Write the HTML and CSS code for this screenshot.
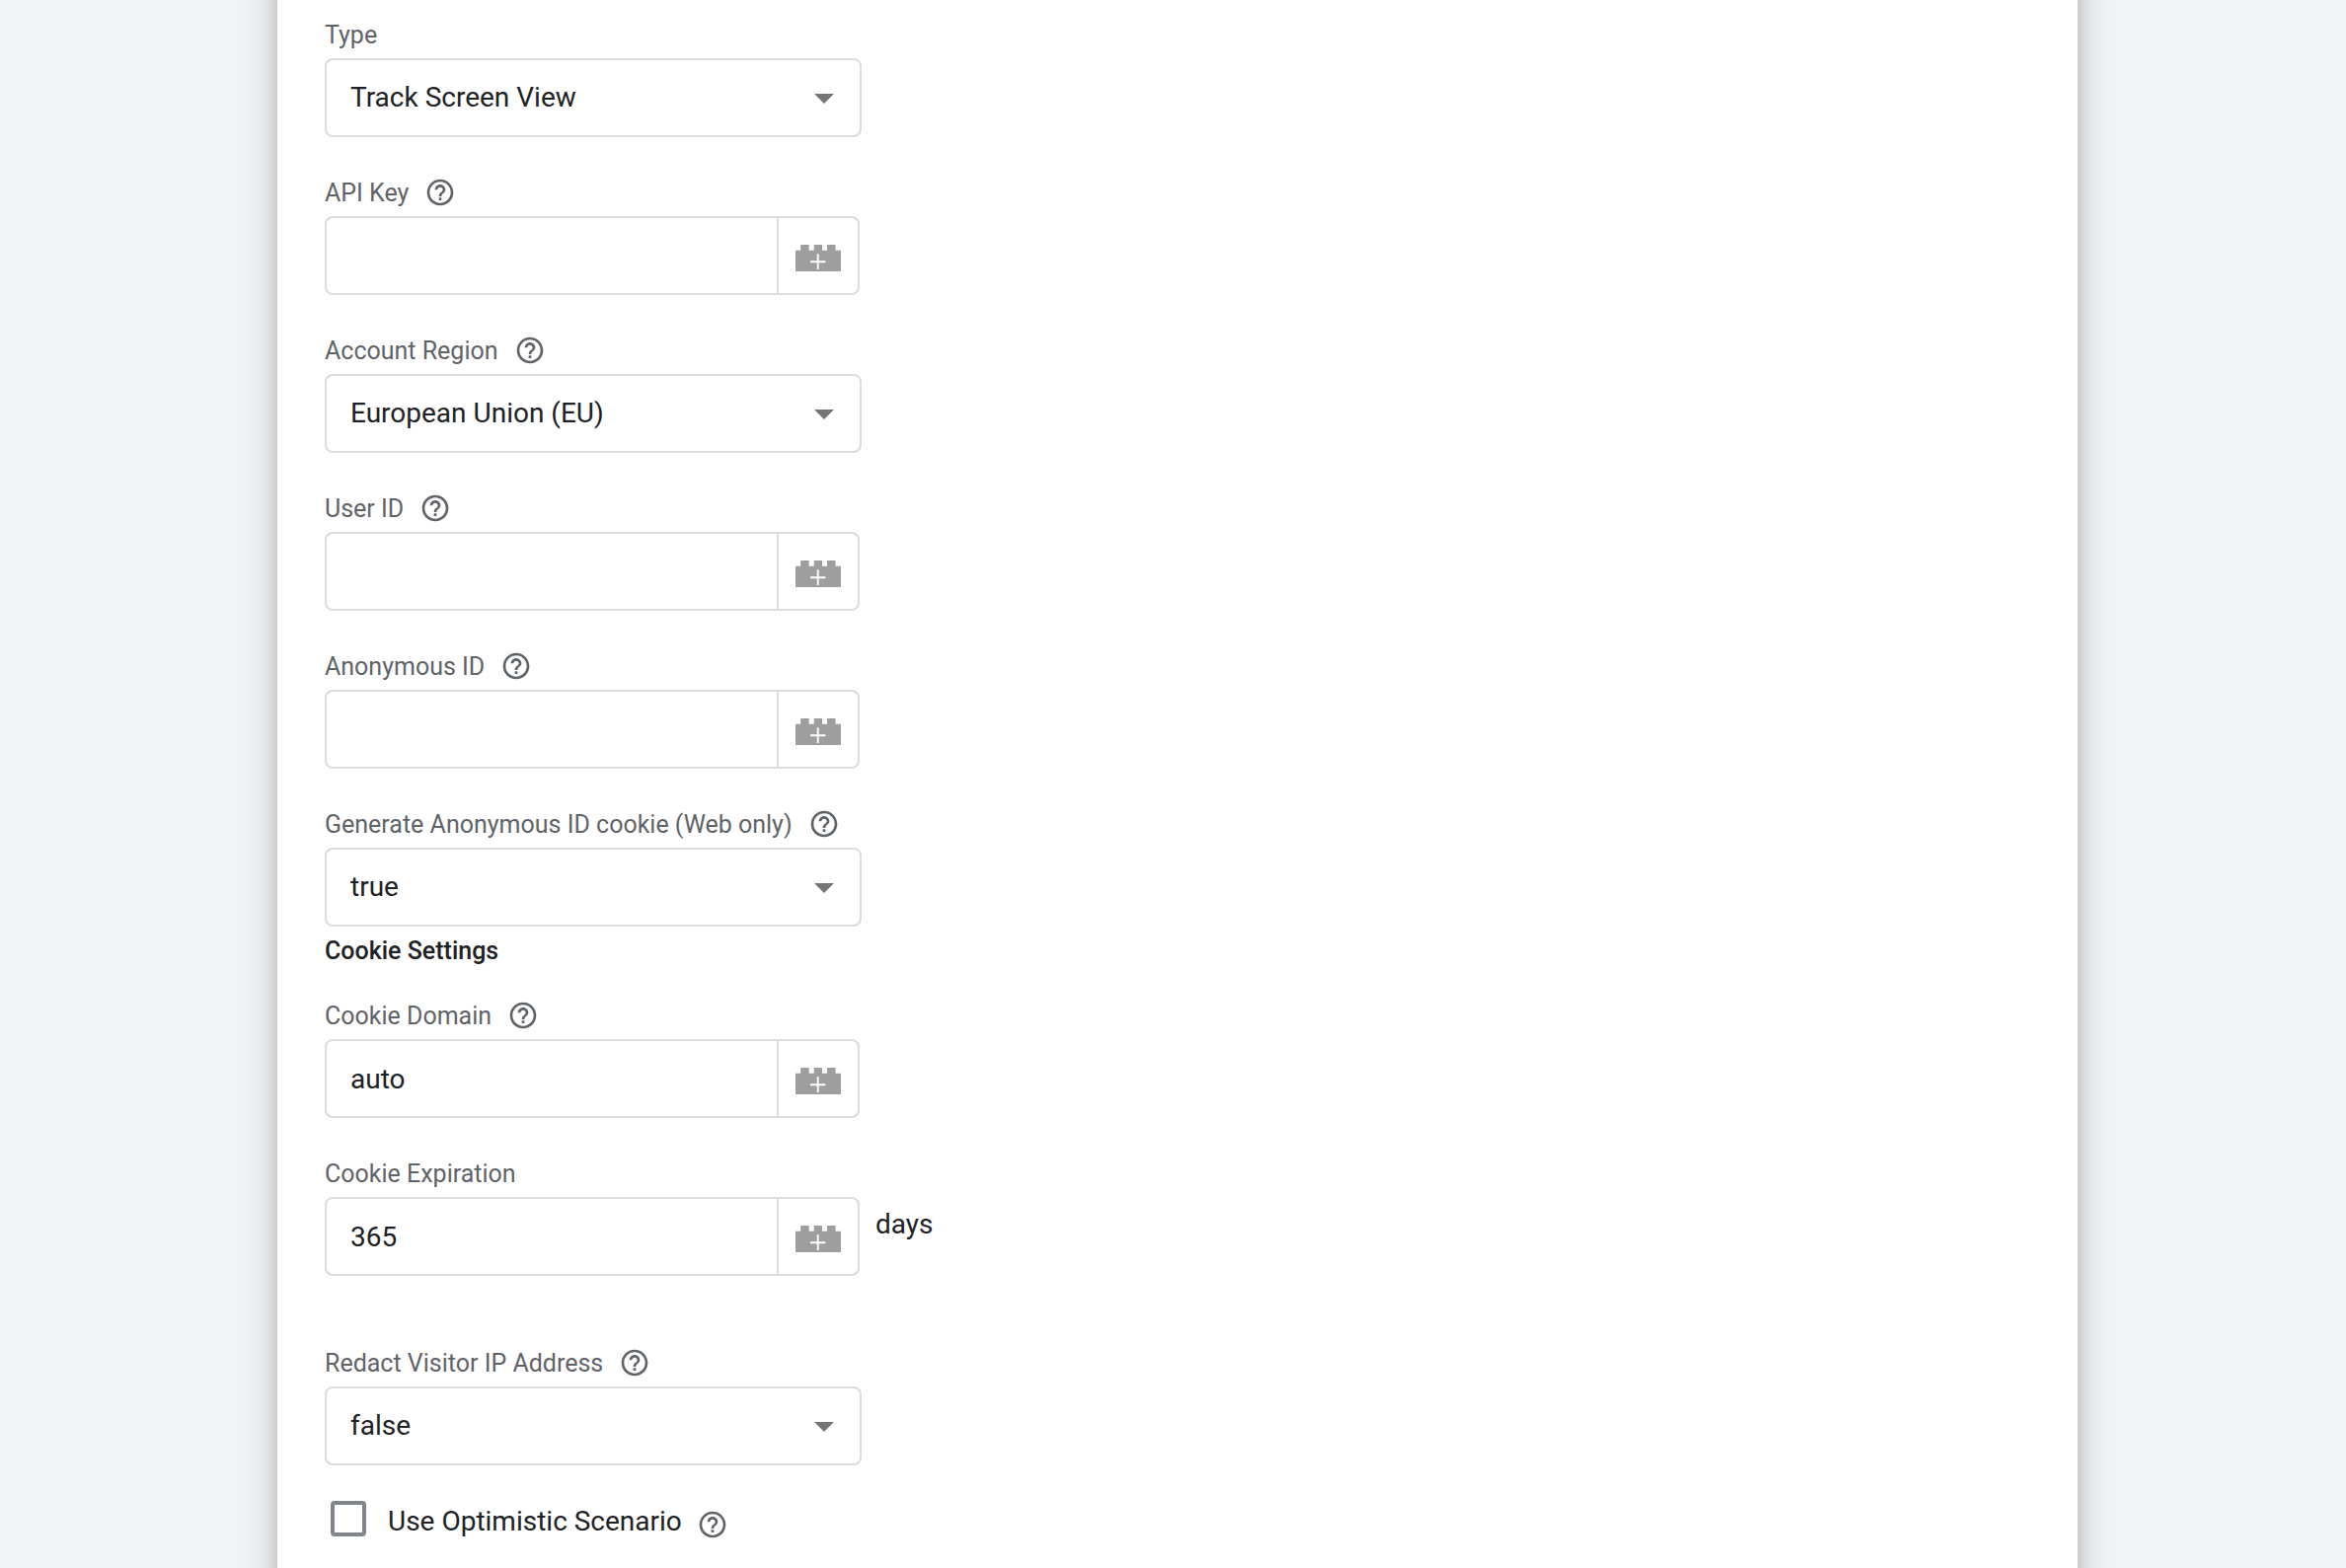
FILE: index.html
```html
<!DOCTYPE html>
<html lang="en">

<head>
    <title>Tag Configuration</title>
    <meta charset="UTF-8">
    <meta name="viewport" content="width=device-width, initial-scale=1.0">
    <link rel="stylesheet" href="styles.css">
</head>

<body>
    <!-- shared icons -->
    <svg class="icon-defs" aria-hidden="true">
        <symbol id="icon-help" viewBox="0 0 24 24">
            <path d="M11 18h2v-2h-2v2zm1-16C6.48 2 2 6.48 2 12s4.48 10 10 10 10-4.48 10-10S17.52 2 12 2zm0 18c-4.41 0-8-3.59-8-8s3.59-8 8-8 8 3.59 8 8-3.59 8-8 8zm0-14c-2.21 0-4 1.79-4 4h2c0-1.1.9-2 2-2s2 .9 2 2c0 2-3 1.75-3 5h2c0-2.25 3-2.5 3-5 0-2.21-1.79-4-4-4z"/>
        </symbol>
        <symbol id="icon-brick" viewBox="0 0 46 27">
            <path d="M0 5.7h5.2V0h8.5v5.7h5V0h8.3v5.7h5V0h8.6v5.7H46V27H0z"/>
            <path d="M15 17.3h15.4M22.7 9.3v15.7" stroke="#fff" stroke-width="1.9"/>
        </symbol>
    </svg>

    <div class="page">
        <form class="card">
            <div class="field">
                <div class="field-label">
                    <label for="type">Type</label>
                </div>
                <div class="select-box">
                    <select id="type">
                        <option>Track Screen View</option>
                    </select>
                </div>
            </div>

            <div class="field">
                <div class="field-label">
                    <label for="api-key">API Key</label>
                    <button type="button" class="help" aria-label="Help"><svg><use href="#icon-help"/></svg></button>
                </div>
                <div class="input-box">
                    <input type="text" id="api-key">
                    <button type="button" class="variable" aria-label="Insert variable"><svg><use href="#icon-brick"/></svg></button>
                </div>
            </div>

            <div class="field">
                <div class="field-label">
                    <label for="region">Account Region</label>
                    <button type="button" class="help" aria-label="Help"><svg><use href="#icon-help"/></svg></button>
                </div>
                <div class="select-box">
                    <select id="region">
                        <option>European Union (EU)</option>
                    </select>
                </div>
            </div>

            <div class="field">
                <div class="field-label">
                    <label for="user-id">User ID</label>
                    <button type="button" class="help" aria-label="Help"><svg><use href="#icon-help"/></svg></button>
                </div>
                <div class="input-box">
                    <input type="text" id="user-id">
                    <button type="button" class="variable" aria-label="Insert variable"><svg><use href="#icon-brick"/></svg></button>
                </div>
            </div>

            <div class="field">
                <div class="field-label">
                    <label for="anonymous-id">Anonymous ID</label>
                    <button type="button" class="help" aria-label="Help"><svg><use href="#icon-help"/></svg></button>
                </div>
                <div class="input-box">
                    <input type="text" id="anonymous-id">
                    <button type="button" class="variable" aria-label="Insert variable"><svg><use href="#icon-brick"/></svg></button>
                </div>
            </div>

            <div class="field field-tight">
                <div class="field-label">
                    <label for="generate-cookie">Generate Anonymous ID cookie (Web only)</label>
                    <button type="button" class="help" aria-label="Help"><svg><use href="#icon-help"/></svg></button>
                </div>
                <div class="select-box">
                    <select id="generate-cookie">
                        <option>true</option>
                        <option>false</option>
                    </select>
                </div>
            </div>

            <h3 class="group-title">Cookie Settings</h3>

            <div class="field">
                <div class="field-label">
                    <label for="cookie-domain">Cookie Domain</label>
                    <button type="button" class="help" aria-label="Help"><svg><use href="#icon-help"/></svg></button>
                </div>
                <div class="input-box">
                    <input type="text" id="cookie-domain" value="auto">
                    <button type="button" class="variable" aria-label="Insert variable"><svg><use href="#icon-brick"/></svg></button>
                </div>
            </div>

            <div class="field field-last">
                <div class="field-label">
                    <label for="cookie-expiration">Cookie Expiration</label>
                </div>
                <div class="input-row">
                    <div class="input-box">
                        <input type="text" id="cookie-expiration" value="365">
                        <button type="button" class="variable" aria-label="Insert variable"><svg><use href="#icon-brick"/></svg></button>
                    </div>
                    <span class="unit">days</span>
                </div>
            </div>

            <div class="field">
                <div class="field-label">
                    <label for="redact-ip">Redact Visitor IP Address</label>
                    <button type="button" class="help" aria-label="Help"><svg><use href="#icon-help"/></svg></button>
                </div>
                <div class="select-box">
                    <select id="redact-ip">
                        <option>false</option>
                        <option>true</option>
                    </select>
                </div>
            </div>

            <div class="check-row">
                <input type="checkbox" id="optimistic">
                <label for="optimistic">Use Optimistic Scenario</label>
                <button type="button" class="help" aria-label="Help"><svg><use href="#icon-help"/></svg></button>
            </div>
        </form>
    </div>
</body>

</html>
```

FILE: styles.css
```css
* {
    box-sizing: border-box;
}

body {
    margin: 0;
    font-family: Roboto, "Liberation Sans", sans-serif;
    font-size: 28px;
    color: #202124;
    background-color: #f1f3f4;
}

.icon-defs {
    display: none;
}

.page {
    min-height: 100vh;
    padding: 0 272px 0 281px;
    overflow: hidden;
    display: flex;
}

/* the card runs past the top and bottom edges of the page */
.card {
    flex: 1;
    margin: -80px 0;
    padding: 99px 48px 96px;
    background-color: #fff;
    box-shadow: 0 0 12px rgba(0, 0, 0, 0.12), 0 0 36px rgba(0, 0, 0, 0.22);
}

.field {
    margin-bottom: 40px;
}

.field-tight {
    margin-bottom: 8px;
}

.field-last {
    margin-bottom: 72px;
}

.field-label {
    display: flex;
    align-items: center;
    gap: 16px;
    height: 32px;
    margin-bottom: 8px;
    font-size: 25px;
    color: #5f6368;
}

.group-title {
    margin: 0 0 32px;
    font-size: 25px;
    font-weight: 500;
    line-height: 34px;
}

.help {
    width: 32px;
    height: 32px;
    padding: 0;
    border: none;
    background: none;
    cursor: pointer;
}

.help svg {
    display: block;
    width: 32px;
    height: 32px;
    fill: #5f6368;
}

.select-box {
    position: relative;
    width: 544px;
}

.select-box select {
    display: block;
    width: 100%;
    height: 80px;
    padding: 0 64px 2px 24px;
    border: 2px solid #dadce0;
    border-radius: 8px;
    appearance: none;
    background-color: #fff;
    font: inherit;
    color: inherit;
}

/* drop-down arrow */
.select-box::after {
    content: "";
    position: absolute;
    top: 36px;
    right: 28px;
    border: 10px solid transparent;
    border-top-color: #757575;
    border-bottom: none;
    pointer-events: none;
}

.input-row {
    display: flex;
    gap: 16px;
}

.input-box {
    display: flex;
    width: 542px;
    height: 80px;
    border: 2px solid #dadce0;
    border-radius: 8px;
}

.input-box input {
    flex: 1;
    min-width: 0;
    padding: 0 24px;
    border: none;
    background: none;
    outline: none;
    font: inherit;
    color: inherit;
}

.variable {
    display: flex;
    justify-content: center;
    width: 82px;
    padding: 27px 0 0;
    border: none;
    border-left: 2px solid #dadce0;
    background: none;
    cursor: pointer;
}

.variable svg {
    width: 46px;
    height: 27px;
    fill: #9e9e9e;
}

.unit {
    line-height: 56px;
}

.check-row {
    display: flex;
    height: 40px;
    margin: -4px 0 0 6px;
}

.check-row input {
    width: 36px;
    height: 36px;
    margin: 0 22px 0 0;
    border: 4px solid #80868b;
    border-radius: 4px;
    appearance: none;
}

.check-row label {
    margin-right: 15px;
    line-height: 42px;
}

.check-row .help {
    align-self: flex-end;
}
```
